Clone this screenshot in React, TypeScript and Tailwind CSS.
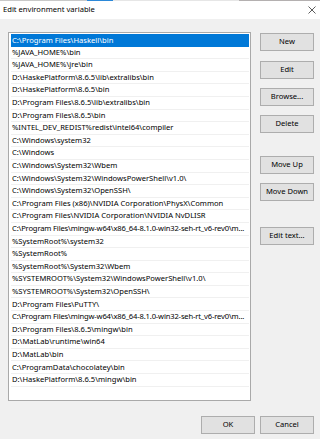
const paths = [
  "C:\\Program Files\\Haskell\\bin",
  "%JAVA_HOME%\\bin",
  "%JAVA_HOME%\\jre\\bin",
  "D:\\HaskePlatform\\8.6.5\\lib\\extralibs\\bin",
  "D:\\HaskePlatform\\8.6.5\\bin",
  "D:\\Program Files\\8.6.5\\lib\\extralibs\\bin",
  "D:\\Program Files\\8.6.5\\bin",
  "%INTEL_DEV_REDIST%redist\\intel64\\compiler",
  "C:\\Windows\\system32",
  "C:\\Windows",
  "C:\\Windows\\System32\\Wbem",
  "C:\\Windows\\System32\\WindowsPowerShell\\v1.0\\",
  "C:\\Windows\\System32\\OpenSSH\\",
  "C:\\Program Files (x86)\\NVIDIA Corporation\\PhysX\\Common",
  "C:\\Program Files\\NVIDIA Corporation\\NVIDIA NvDLISR",
  "C:\\Program Files\\mingw-w64\\x86_64-8.1.0-win32-seh-rt_v6-rev0\\m...",
  "%SystemRoot%\\system32",
  "%SystemRoot%",
  "%SystemRoot%\\System32\\Wbem",
  "%SYSTEMROOT%\\System32\\WindowsPowerShell\\v1.0\\",
  "%SYSTEMROOT%\\System32\\OpenSSH\\",
  "D:\\Program Files\\PuTTY\\",
  "C:\\Program Files\\mingw-w64\\x86_64-8.1.0-win32-seh-rt_v6-rev0\\m...",
  "D:\\Program Files\\8.6.5\\mingw\\bin",
  "D:\\MatLab\\runtime\\win64",
  "D:\\MatLab\\bin",
  "C:\\ProgramData\\chocolatey\\bin",
  "D:\\HaskePlatform\\8.6.5\\mingw\\bin",
];

const Btn = ({ label, className = "" }: { label: string; className?: string }) => (
  <button
    className={`w-[54px] h-[18px] bg-[#e1e1e1] border border-[#adadad] text-[7.6px] text-black leading-none flex items-center justify-center ${className}`}
  >
    {label}
  </button>
);

export default function App() {
  return (
    <div
      className="w-[320px] h-[439px] bg-[#f0f0f0] flex flex-col text-black overflow-hidden"
      style={{ fontFamily: '"Noto Sans", "Open Sans", sans-serif' }}
    >
      {/* top border strip */}
      <div className="flex h-px">
        <div className="w-[87px] bg-[#c8c8c8]" />
        <div className="w-[26px] bg-[#2b88d8]" />
        <div className="w-[126px] bg-[#e6e6e6]" />
        <div className="flex-1 bg-[#b4b0b0]" />
      </div>
      {/* title bar */}
      <div className="h-[18px] bg-white flex items-center justify-between pl-[3px] pr-[4px]">
        <span className="text-[7.6px]">Edit environment variable</span>
        <svg width="8" height="8" viewBox="0 0 8 8">
          <path d="M0.5 0.5 L7.5 7.5 M7.5 0.5 L0.5 7.5" stroke="#333" strokeWidth="0.8" />
        </svg>
      </div>

      <div className="flex pl-[8px] pt-[13px]">
        {/* list */}
        <div className="w-[243px] h-[369px] bg-white border border-[#a9a9a9] pt-px pl-[2px] pr-px">
          {paths.map((p, i) => (
            <div
              key={i}
              className={`h-[12.6px] flex items-center pl-px text-[7.6px] whitespace-nowrap ${
                p.length > 60 ? "tracking-[-0.16px]" : ""
              } ${i === 0 ? "bg-[#0078d7] text-white" : "border-b border-[#f0f0f0]"}`}
            >
              {p}
            </div>
          ))}
        </div>

        {/* buttons */}
        <div className="flex flex-col ml-[9px] pt-px">
          <Btn label="New" />
          <Btn label="Edit" className="mt-[10px]" />
          <Btn label="Browse..." className="mt-[9px]" />
          <Btn label="Delete" className="mt-[9px]" />
          <Btn label="Move Up" className="mt-[23px]" />
          <Btn label="Move Down" className="mt-[9px]" />
          <Btn label="Edit text..." className="mt-[26px]" />
        </div>
      </div>

      <div className="flex justify-end pr-[6px] mt-[15px] gap-[5px]">
        <Btn label="OK" className="w-[53px] border-[#0078d7]" />
        <Btn label="Cancel" />
      </div>
    </div>
  );
}
